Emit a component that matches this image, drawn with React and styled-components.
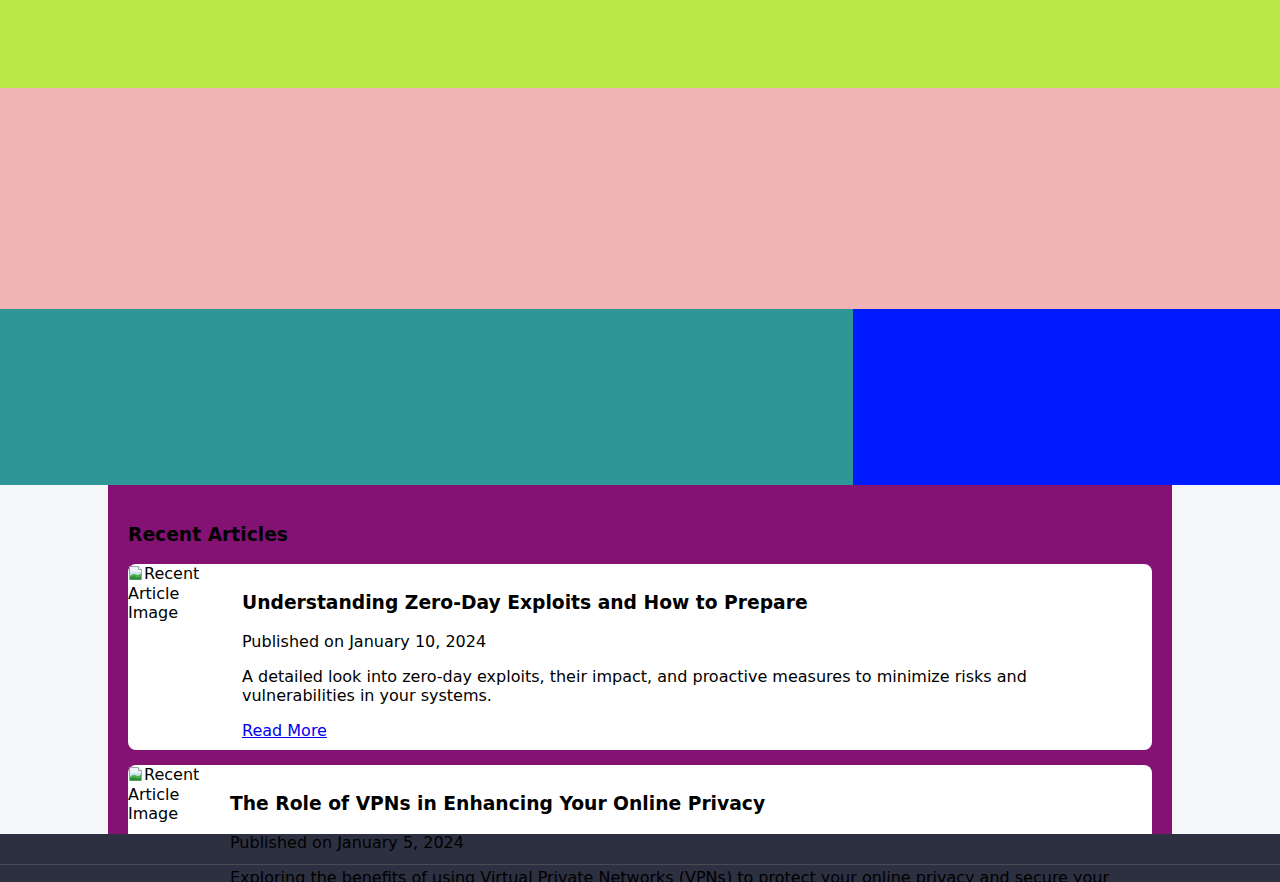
import React from 'react';
import styled, { createGlobalStyle } from 'styled-components';

const GlobalStyle = createGlobalStyle`
	body {
		margin: 0;
		background: #f5f6fa;
		font-family: "DejaVu Sans", "Liberation Sans", sans-serif;
		color: #000;
	}
`;

const Header = styled.header`
	height: 88px;
	background: #b9e944;
`;
const Hero = styled.section`
	height: 221px;
	background: #f0b4b4;
`;
const Band = styled.div`
	display: grid;
	grid-template-columns: 2fr 1fr;
	height: 176px;
`;
const Block = styled.div`
	background: ${(p) => p.color};
`;

const Recent = styled.section`
	max-width: 1024px;
	height: 310px;
	margin: 0 auto;
	padding: 39px 20px 0;
	background: #831273;
	h2 {
		margin: 0 0 19px;
		font-size: 18.72px;
		font-weight: bold;
	}
`;

const Card = styled.article`
	display: flex;
	background: #fff;
	border-radius: 8px;
	margin-bottom: 15px;
`;

const Thumb = styled.div`
	flex: none;
	width: ${(p) => p.width}px;
	margin-right: 14px;
	font-size: 16px;
	line-height: 19.5px;
	svg {
		vertical-align: -2px;
	}
`;

const Content = styled.div`
	flex: 1;
	padding: 28px 20px 10px 0;
	h3 {
		margin: 0 0 19px;
		font-size: 18.72px;
		font-weight: bold;
	}
	p {
		margin: 0 0 16px;
		font-size: 16px;
	}
	a {
		font-size: 16px;
		color: #0000ee;
		text-decoration: underline;
	}
`;

const Footer = styled.footer`
	background: #2d3040;
	padding-top: 30px;
	.bottom {
		border-top: 1px solid #4a4b52;
		height: 60px;
	}
`;

const BrokenIcon = () => (
	<svg width="16" height="16" viewBox="0 0 16 16">
		<path d="M1.5 1.5h9l3 3v10h-12z" fill="#eef3f8" stroke="#9aa3ad" />
		<path d="M10.5 1.5v3h3" fill="#fff" stroke="#9aa3ad" />
		<path d="M2 7h11v7H2z" fill="#cfe3f5" />
		<path d="M2 14.5V11c2-2 4-2.5 6-1.5 2 1 3.5 0 5-1v6z" fill="#4caf50" />
		<path d="M2 14.5V12.5c2-1.5 4-1.5 6-.5 2 1 3.5.5 5-.5v3z" fill="#2e8b3a" />
	</svg>
);

const articles = [
	{
		title: 'Understanding Zero-Day Exploits and How to Prepare',
		date: 'January 10, 2024',
		text: 'A detailed look into zero-day exploits, their impact, and proactive measures to minimize risks and vulnerabilities in your systems.',
		thumb: 100,
	},
	{
		title: 'The Role of VPNs in Enhancing Your Online Privacy',
		date: 'January 5, 2024',
		text: 'Exploring the benefits of using Virtual Private Networks (VPNs) to protect your online privacy and secure your internet connection.',
		thumb: 88,
	},
];

const App = () => {
	return (
		<>
			<GlobalStyle />
			<Header />
			<Hero />
			<Band>
				<Block color="#2e9696" />
				<Block color="#001aff" />
			</Band>
			<Recent>
				<h2>Recent Articles</h2>
				{articles.map((a) => (
					<Card key={a.title}>
						<Thumb width={a.thumb}>
							<BrokenIcon />Recent Article Image
						</Thumb>
						<Content>
							<h3>{a.title}</h3>
							<p>Published on {a.date}</p>
							<p>{a.text}</p>
							<a href="#">Read More</a>
						</Content>
					</Card>
				))}
			</Recent>
			<Footer>
				<div className="bottom" />
			</Footer>
		</>
	);
};

export default App;
